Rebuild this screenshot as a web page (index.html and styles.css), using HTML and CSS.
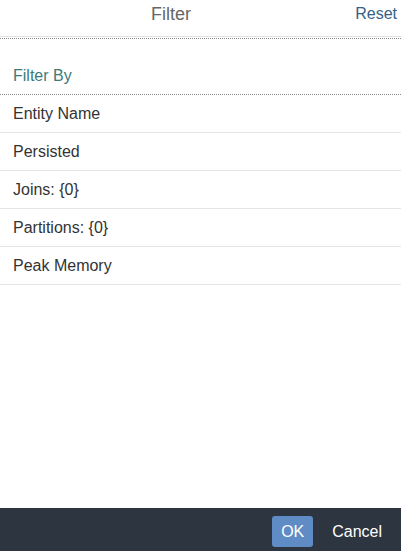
FILE: index.html
```html
<!DOCTYPE html>
<html>
<head>
<meta charset="utf-8">
<link rel="stylesheet" href="styles.css">
</head>
<body>
<div class="dialog">
  <header class="header">
    <span class="title">Filter</span>
    <span class="reset">Reset</span>
  </header>
  <div class="content">
    <div class="group">Filter By</div>
    <ul class="list">
      <li class="item">Entity Name</li>
      <li class="item">Persisted</li>
      <li class="item">Joins: {0}</li>
      <li class="item">Partitions: {0}</li>
      <li class="item">Peak Memory</li>
    </ul>
  </div>
  <footer class="footer">
    <button class="btn btn-ok">OK</button>
    <button class="btn btn-cancel">Cancel</button>
  </footer>
</div>
</body>
</html>
```
FILE: styles.css
```css
html, body {
  margin: 0;
  padding: 0;
  height: 100%;
}
body {
  font-family: "Liberation Sans", Arial, sans-serif;
  background: #fff;
}
.dialog {
  display: flex;
  flex-direction: column;
  height: 551px;
  width: 401px;
}
.header {
  display: flex;
  align-items: center;
  height: 36px;
  border-bottom: 1px solid #e2e2e2;
  position: relative;
}
.header::after {
  content: "";
  position: absolute;
  left: 0;
  right: 0;
  bottom: -3px;
  border-bottom: 1px dotted #8c8c8c;
}
.title {
  margin-left: 151px;
  font-size: 18px;
  color: #666;
  margin-top: -8px;
}
.reset {
  margin-left: auto;
  margin-right: 4px;
  font-size: 16px;
  color: #346187;
  margin-top: -8px;
}
.content {
  flex: 1;
  padding-top: 3px;
}
.group {
  height: 55px;
  box-sizing: border-box;
  padding: 0 13px;
  display: flex;
  align-items: flex-end;
  padding-bottom: 9px;
  font-size: 16px;
  color: #3b7b7b;
  border-bottom: 1px dotted #8c8c8c;
}
.list {
  list-style: none;
  margin: 0;
  padding: 0;
}
.item {
  height: 38px;
  box-sizing: border-box;
  display: flex;
  align-items: center;
  padding: 0 13px;
  font-size: 16px;
  color: #333;
  border-bottom: 1px solid #e5e5e5;
}
.footer {
  height: 43px;
  box-sizing: border-box;
  padding-top: 4px;
  background: #2d3540;
  display: flex;
  align-items: center;
  justify-content: flex-end;
  padding-right: 12px;
  gap: 12px;
}
.btn {
  font-family: "Liberation Sans", Arial, sans-serif;
  font-size: 16px;
  border: none;
  color: #fff;
  height: 31px;
  border-radius: 3px;
  cursor: pointer;
}
.btn-ok {
  background: #5f8cc4;
  width: 41px;
  padding: 0;
}
.btn-cancel {
  background: transparent;
  padding: 0 7px;
}
```
